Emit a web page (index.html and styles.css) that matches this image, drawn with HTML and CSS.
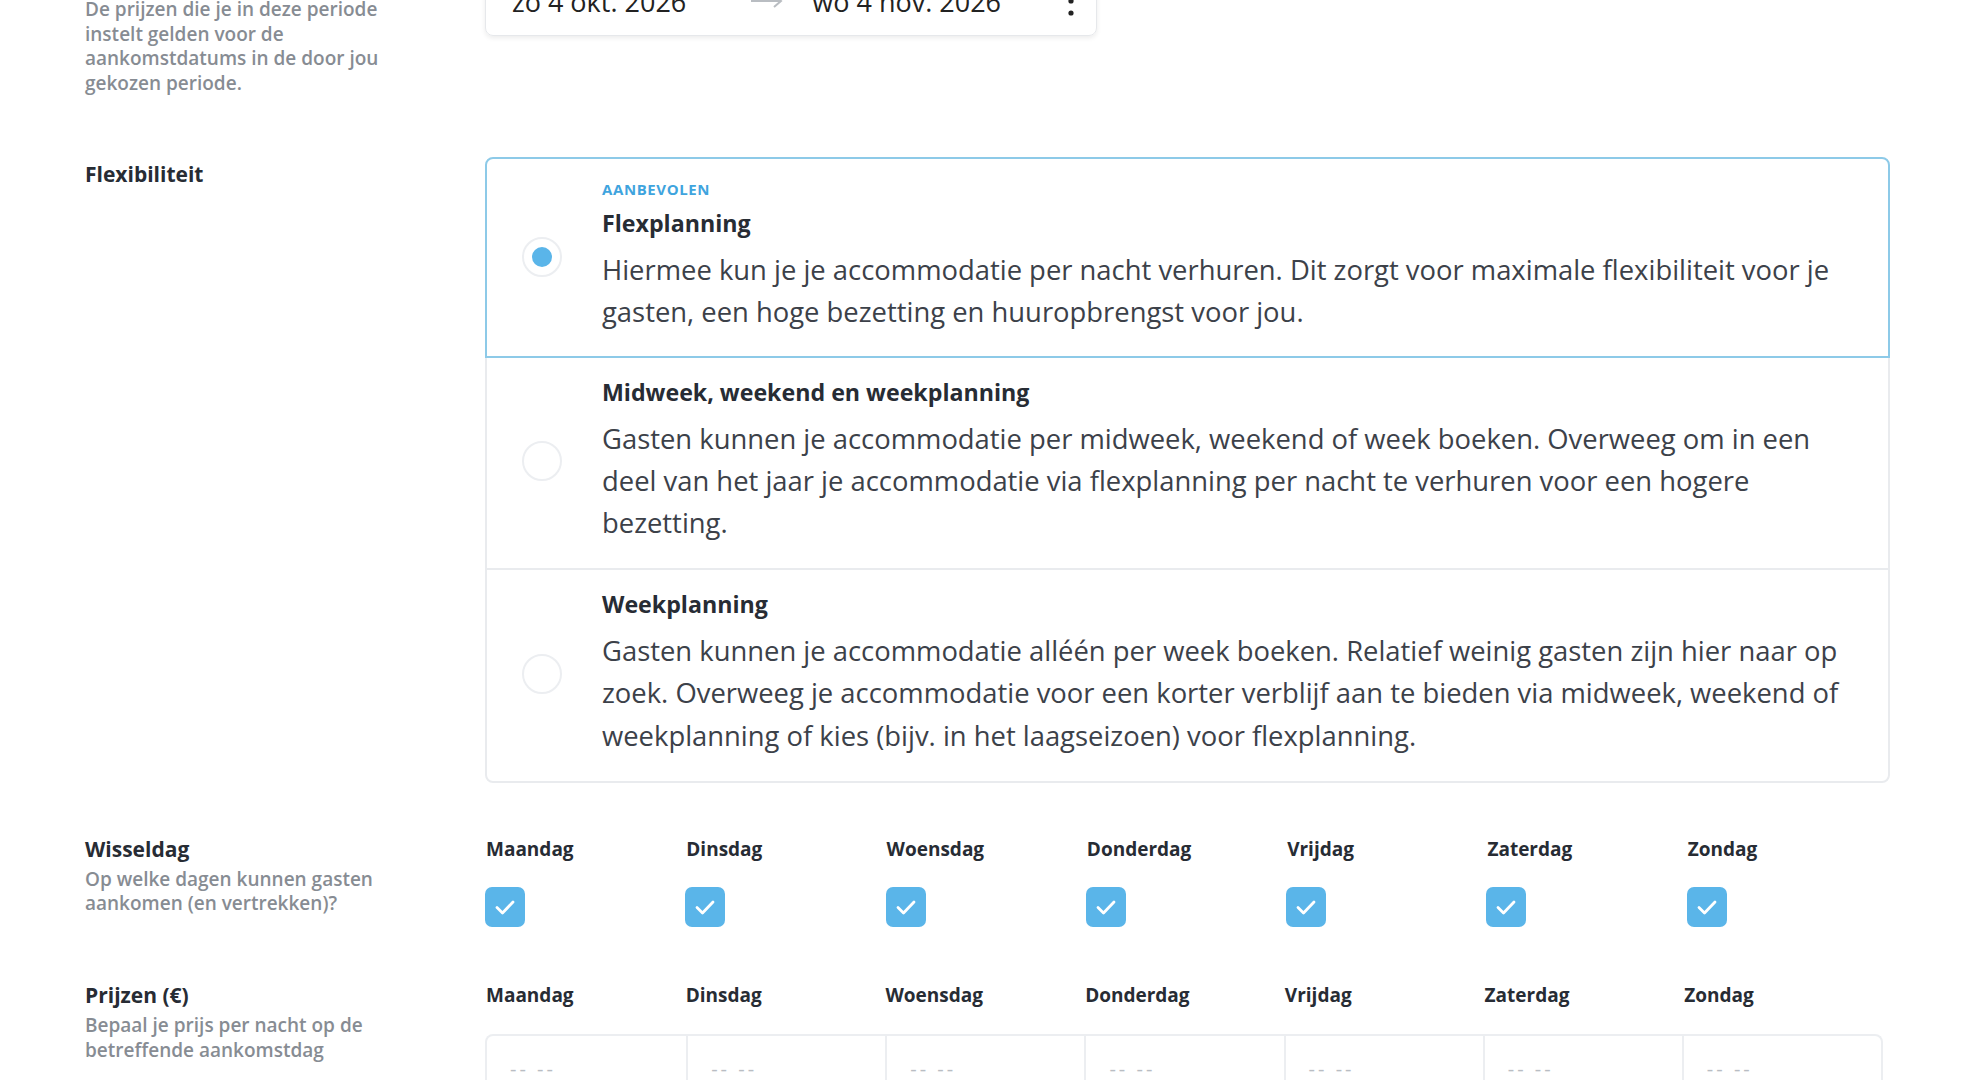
FILE: index.html
```html
<!DOCTYPE html>
<html lang="nl">
<head>
    <meta charset="UTF-8">
    <meta name="viewport" content="width=device-width, initial-scale=1.0">
    <title>Prijzen en beschikbaarheid</title>
    <link rel="stylesheet" href="styles.css">
</head>
<body>
    <div class="page">
        <div class="row row-period">
            <div class="label">
                <div class="label-title">Periode</div>
                <div class="label-sub">De prijzen die je in deze periode<br>instelt gelden voor de<br>aankomstdatums in de door jou<br>gekozen periode.</div>
            </div>
            <div class="content">
                <div class="date-box">
                    <span class="date">zo 4 okt. 2026</span>
                    <span class="arrow">
                        <svg width="34" height="14" viewBox="0 0 34 14"><path d="M1 7h30M24 1l7 6-7 6" fill="none" stroke="#b9bdc2" stroke-width="2"/></svg>
                    </span>
                    <span class="date">wo 4 nov. 2026</span>
                    <span class="more">
                        <svg width="6" height="34" viewBox="0 0 6 34"><circle cx="3" cy="5" r="2.6" fill="#222"/><circle cx="3" cy="17" r="2.6" fill="#222"/><circle cx="3" cy="29" r="2.6" fill="#222"/></svg>
                    </span>
                </div>
            </div>
        </div>

        <div class="row row-flex">
            <div class="label">
                <div class="label-title flex-title">Flexibiliteit</div>
            </div>
            <div class="content">
                <div class="options">
                    <div class="option selected">
                        <span class="radio"></span>
                        <div class="option-text">
                            <div class="tag">AANBEVOLEN</div>
                            <div class="option-title">Flexplanning</div>
                            <div class="option-desc">Hiermee kun je je accommodatie per nacht verhuren. Dit zorgt voor maximale flexibiliteit voor je<br>gasten, een hoge bezetting en huuropbrengst voor jou.</div>
                        </div>
                    </div>
                    <div class="option">
                        <span class="radio"></span>
                        <div class="option-text">
                            <div class="option-title">Midweek, weekend en weekplanning</div>
                            <div class="option-desc">Gasten kunnen je accommodatie per midweek, weekend of week boeken. Overweeg om in een<br>deel van het jaar je accommodatie via flexplanning per nacht te verhuren voor een hogere<br>bezetting.</div>
                        </div>
                    </div>
                    <div class="option">
                        <span class="radio"></span>
                        <div class="option-text">
                            <div class="option-title">Weekplanning</div>
                            <div class="option-desc">Gasten kunnen je accommodatie alléén per week boeken. Relatief weinig gasten zijn hier naar op<br>zoek. Overweeg je accommodatie voor een korter verblijf aan te bieden via midweek, weekend of<br>weekplanning of kies (bijv. in het laagseizoen) voor flexplanning.</div>
                        </div>
                    </div>
                </div>
            </div>
        </div>

        <div class="row row-days">
            <div class="label">
                <div class="label-title">Wisseldag</div>
                <div class="label-sub">Op welke dagen kunnen gasten<br>aankomen (en vertrekken)?</div>
            </div>
            <div class="content">
                <div class="days">
                    <div class="day"><div class="day-name">Maandag</div><span class="check"><svg width="40" height="40" viewBox="0 0 40 40"><path d="M12 20.5l5.5 5.5 10.5-11" fill="none" stroke="#fff" stroke-width="2.8" stroke-linecap="round" stroke-linejoin="round"/></svg></span></div>
                    <div class="day"><div class="day-name">Dinsdag</div><span class="check"><svg width="40" height="40" viewBox="0 0 40 40"><path d="M12 20.5l5.5 5.5 10.5-11" fill="none" stroke="#fff" stroke-width="2.8" stroke-linecap="round" stroke-linejoin="round"/></svg></span></div>
                    <div class="day"><div class="day-name">Woensdag</div><span class="check"><svg width="40" height="40" viewBox="0 0 40 40"><path d="M12 20.5l5.5 5.5 10.5-11" fill="none" stroke="#fff" stroke-width="2.8" stroke-linecap="round" stroke-linejoin="round"/></svg></span></div>
                    <div class="day"><div class="day-name">Donderdag</div><span class="check"><svg width="40" height="40" viewBox="0 0 40 40"><path d="M12 20.5l5.5 5.5 10.5-11" fill="none" stroke="#fff" stroke-width="2.8" stroke-linecap="round" stroke-linejoin="round"/></svg></span></div>
                    <div class="day"><div class="day-name">Vrijdag</div><span class="check"><svg width="40" height="40" viewBox="0 0 40 40"><path d="M12 20.5l5.5 5.5 10.5-11" fill="none" stroke="#fff" stroke-width="2.8" stroke-linecap="round" stroke-linejoin="round"/></svg></span></div>
                    <div class="day"><div class="day-name">Zaterdag</div><span class="check"><svg width="40" height="40" viewBox="0 0 40 40"><path d="M12 20.5l5.5 5.5 10.5-11" fill="none" stroke="#fff" stroke-width="2.8" stroke-linecap="round" stroke-linejoin="round"/></svg></span></div>
                    <div class="day"><div class="day-name">Zondag</div><span class="check"><svg width="40" height="40" viewBox="0 0 40 40"><path d="M12 20.5l5.5 5.5 10.5-11" fill="none" stroke="#fff" stroke-width="2.8" stroke-linecap="round" stroke-linejoin="round"/></svg></span></div>
                </div>
            </div>
        </div>

        <div class="row row-prices">
            <div class="label">
                <div class="label-title">Prijzen (€)</div>
                <div class="label-sub">Bepaal je prijs per nacht op de<br>betreffende aankomstdag</div>
            </div>
            <div class="content">
                <div class="days price-days">
                    <div class="day-name">Maandag</div>
                    <div class="day-name">Dinsdag</div>
                    <div class="day-name">Woensdag</div>
                    <div class="day-name">Donderdag</div>
                    <div class="day-name">Vrijdag</div>
                    <div class="day-name">Zaterdag</div>
                    <div class="day-name">Zondag</div>
                </div>
                <div class="prices">
                    <div class="price">-- --</div>
                    <div class="price">-- --</div>
                    <div class="price">-- --</div>
                    <div class="price">-- --</div>
                    <div class="price">-- --</div>
                    <div class="price">-- --</div>
                    <div class="price">-- --</div>
                </div>
            </div>
        </div>
    </div>
</body>
</html>
```

FILE: styles.css
```css
body {
    margin: 0;
    background: #ffffff;
    font-family: "Open Sans", Lato, sans-serif;
    color: #272c34;
}

.page {
    margin-top: -34px;
    padding: 0 82px 0 85px;
}

.row {
    display: grid;
    grid-template-columns: 400px 1405px;
}

.label-title {
    font-size: 21px;
    font-weight: 700;
    line-height: 26px;
    color: #272c34;
}

.label-sub {
    margin-top: 5px;
    font-size: 19px;
    font-weight: 600;
    line-height: 24.5px;
    color: #878c93;
    white-space: nowrap;
}

/* periode */

.date-box {
    width: 612px;
    height: 70px;
    border: 1px solid #e6e8eb;
    border-radius: 8px;
    box-shadow: 0 2px 5px rgba(0, 0, 0, 0.08);
    display: flex;
    align-items: center;
    padding-left: 26px;
    box-sizing: border-box;
}

.date {
    font-size: 27px;
    color: #222;
}

.arrow {
    display: flex;
    margin: 0 28px 0 64px;
}

.more {
    display: flex;
    margin-left: auto;
    margin-right: 22px;
}

/* flexibiliteit */

.row-flex {
    margin-top: 61.5px;
}

.flex-title {
    padding-top: 4px;
}

.options {
    display: flex;
    flex-direction: column;
}

.option {
    display: flex;
    align-items: center;
    border: 2px solid #e9ebee;
    padding: 20px 10px 24px 35px;
    position: relative;
}

.option + .option {
    margin-top: -2px;
}

.option:first-child {
    border-radius: 8px 8px 0 0;
    padding-top: 22.5px;
    padding-bottom: 23px;
}

.option:last-child {
    border-radius: 0 0 8px 8px;
}

.option.selected {
    border-color: #8dcae8;
    z-index: 1;
}

.radio {
    flex: none;
    width: 36px;
    height: 36px;
    border: 2.5px solid #eceef1;
    border-radius: 50%;
    margin-right: 40px;
    display: flex;
    align-items: center;
    justify-content: center;
}

.selected .radio::after {
    content: "";
    width: 20px;
    height: 20px;
    border-radius: 50%;
    background: #5ab5e9;
}

.tag {
    font-size: 15px;
    font-weight: 700;
    line-height: 16px;
    letter-spacing: 0.6px;
    color: #3fa4de;
    margin-bottom: 12px;
}

.option-title {
    font-size: 23.2px;
    font-weight: 700;
    line-height: 28px;
    color: #272c34;
}

.option-desc {
    margin-top: 11.5px;
    font-size: 27.4px;
    line-height: 42.3px;
    color: #3c4149;
    white-space: nowrap;
}

/* wisseldag */

.row-days {
    margin-top: 53px;
}

.days {
    width: 1402px;
    display: grid;
    grid-template-columns: repeat(7, 1fr);
}

.day-name {
    font-size: 19px;
    font-weight: 700;
    line-height: 26px;
    color: #272c34;
    padding-left: 1px;
}

.check {
    display: flex;
    width: 40px;
    height: 40px;
    margin-top: 25px;
    border-radius: 7px;
    background: #5ab5e9;
}

/* prijzen */

.row-prices {
    margin-top: 55.5px;
}

.price-days {
    width: 1398px;
}

.prices {
    width: 1398px;
    margin-top: 26px;
    display: grid;
    grid-template-columns: repeat(7, 1fr);
    border: 2px solid #eceef1;
    border-bottom: none;
    border-radius: 8px 8px 0 0;
    box-sizing: border-box;
}

.price {
    height: 80px;
    padding: 21px 0 0 23px;
    font-size: 20px;
    line-height: 24px;
    letter-spacing: 3px;
    color: #b9bdc3;
}

.price + .price {
    border-left: 2px solid #eceef1;
}
```
